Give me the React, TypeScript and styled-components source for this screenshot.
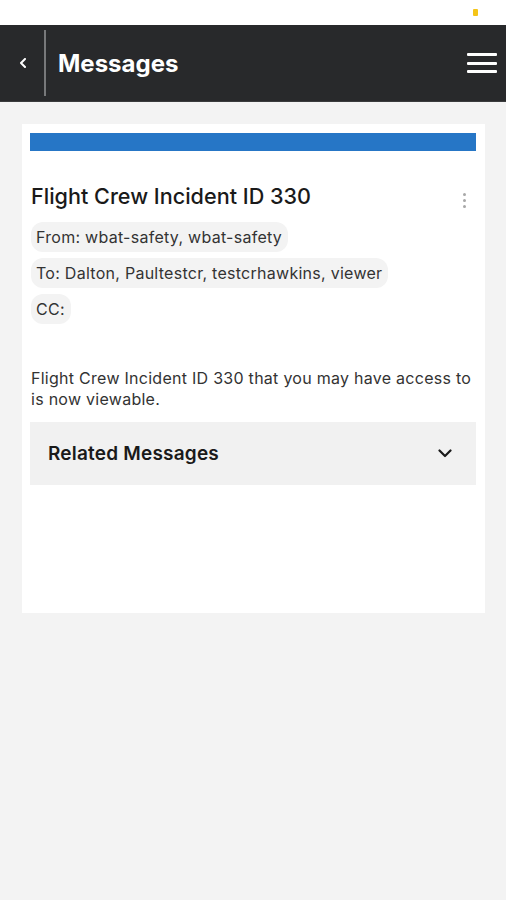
import React from "react";
import styled, { createGlobalStyle } from "styled-components";

const Global = createGlobalStyle`
  html, body { margin: 0; padding: 0; }
  body {
    background: #f3f3f3;
    font-family: Inter, "Noto Sans", sans-serif;
    -webkit-font-smoothing: antialiased;
  }
`;

const Page = styled.div`
  width: 506px;
  min-height: 900px;
  background: #f3f3f3;
  display: flex;
  flex-direction: column;
`;

const StatusBar = styled.div`
  height: 25px;
  background: #ffffff;
  display: flex;
  justify-content: flex-end;
  align-items: flex-start;
  padding: 9px 28px 0 0;
  box-sizing: border-box;
`;

const Dot = styled.div`
  width: 5px;
  height: 7px;
  border-radius: 1px;
  background: #f5c518;
`;

const Header = styled.header`
  height: 77px;
  background: #28292b;
  border-bottom: 1px solid #3a3b3d;
  box-sizing: border-box;
  display: flex;
  align-items: center;
`;

const BackButton = styled.button`
  width: 46px;
  height: 66px;
  border: none;
  background: transparent;
  display: flex;
  align-items: center;
  justify-content: flex-start;
  padding: 0 0 0 19px;
  border-right: 2px solid #77787a;
  box-sizing: border-box;
`;

const Title = styled.h1`
  margin: 1px 0 0 12px;
  flex: 1;
  color: #ffffff;
  font-size: 24px;
  font-weight: 700;
`;

const MenuButton = styled.button`
  width: 30px;
  height: 20px;
  margin-right: 9px;
  border: none;
  background: transparent;
  padding: 0;
  display: flex;
  flex-direction: column;
  justify-content: space-between;
`;

const MenuBar = styled.span`
  display: block;
  height: 3px;
  background: #ffffff;
  border-radius: 1px;
`;

const Body = styled.main`
  padding: 22px 21px 0 22px;
`;

const Card = styled.section`
  background: #ffffff;
  height: 489px;
  padding: 9px 9px 0 8px;
  box-sizing: border-box;
`;

const Banner = styled.div`
  height: 18px;
  background: #2676c6;
`;

const TitleRow = styled.div`
  display: flex;
  justify-content: space-between;
  align-items: center;
  margin-top: 32px;
  padding-left: 1px;
`;

const MessageTitle = styled.h2`
  margin: 0;
  font-size: 21.6px;
  font-weight: 500;
  color: #1a1a1a;
`;

const Kebab = styled.div`
  display: flex;
  flex-direction: column;
  gap: 3px;
  margin: 8px 10px 0 0;
`;

const KebabDot = styled.span`
  width: 3px;
  height: 3px;
  border-radius: 50%;
  background: #a8a8a8;
`;

const Chips = styled.div`
  display: flex;
  flex-direction: column;
  align-items: flex-start;
  gap: 6px;
  margin-top: 13px;
  padding-left: 1px;
`;

const Chip = styled.div`
  height: 30px;
  line-height: 30px;
  padding: 0 6px 0 5px;
  border-radius: 12px;
  background: #f3f3f3;
  font-size: 16px;
  letter-spacing: 0.27px;
  color: #333333;
`;

const Text = styled.p`
  margin: 44px 0 0 1px;
  font-size: 16px;
  line-height: 21px;
  letter-spacing: 0.27px;
  color: #333333;
`;

const Accordion = styled.div`
  margin-top: 12px;
  height: 63px;
  background: #f1f1f1;
  display: flex;
  align-items: center;
  justify-content: space-between;
  padding: 0 24px 0 18px;
`;

const AccordionTitle = styled.span`
  font-size: 19px;
  font-weight: 600;
  letter-spacing: 0.2px;
  color: #1a1a1a;
`;

export default function App() {
  return (
    <Page>
      <Global />
      <StatusBar>
        <Dot />
      </StatusBar>
      <Header>
        <BackButton aria-label="Back">
          <svg width="8" height="10" viewBox="0 0 8 10">
            <path d="M6 1 L2 5 L6 9" fill="none" stroke="#ffffff" strokeWidth="2" strokeLinecap="round" strokeLinejoin="round" />
          </svg>
        </BackButton>
        <Title>Messages</Title>
        <MenuButton aria-label="Menu">
          <MenuBar />
          <MenuBar />
          <MenuBar />
        </MenuButton>
      </Header>
      <Body>
        <Card>
          <Banner />
          <TitleRow>
            <MessageTitle>Flight Crew Incident ID 330</MessageTitle>
            <Kebab>
              <KebabDot />
              <KebabDot />
              <KebabDot />
            </Kebab>
          </TitleRow>
          <Chips>
            <Chip>From: wbat-safety, wbat-safety</Chip>
            <Chip>To: Dalton, Paultestcr, testcrhawkins, viewer</Chip>
            <Chip>CC:</Chip>
          </Chips>
          <Text>Flight Crew Incident ID 330 that you may have access to is now viewable.</Text>
          <Accordion>
            <AccordionTitle>Related Messages</AccordionTitle>
            <svg width="14" height="9" viewBox="0 0 14 9">
              <path d="M1.5 1.5 L7 7 L12.5 1.5" fill="none" stroke="#1a1a1a" strokeWidth="2.2" strokeLinecap="round" strokeLinejoin="round" />
            </svg>
          </Accordion>
        </Card>
      </Body>
    </Page>
  );
}
